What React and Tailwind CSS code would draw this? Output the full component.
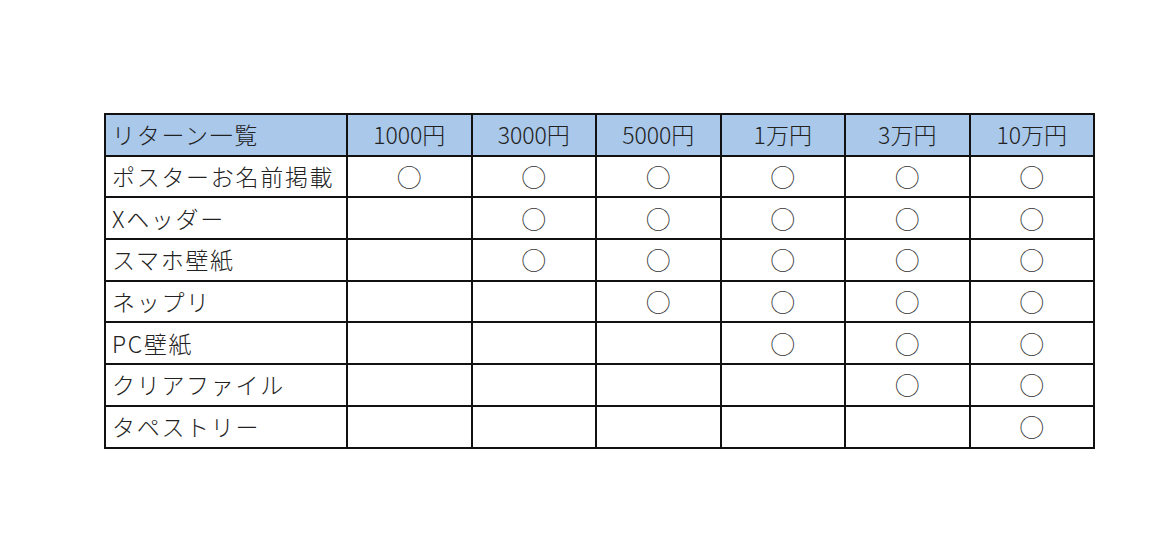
import React from "react";

const headers = ["1000円", "3000円", "5000円", "1万円", "3万円", "10万円"];
const rows = [
  ["ポスターお名前掲載", 0],
  ["Xヘッダー", 1],
  ["スマホ壁紙", 1],
  ["ネップリ", 2],
  ["PC壁紙", 3],
  ["クリアファイル", 4],
  ["タペストリー", 5],
];

export default function App() {
  return (
    <div
      className="w-[1170px] h-[548px] bg-white pl-[104px] pt-[113px] text-[#222]"
      style={{ fontFamily: '"Noto Sans CJK JP", "Noto Sans", sans-serif' }}
    >
      <div className="w-[991px] bg-[#111] p-[2px] grid grid-cols-[240px_repeat(6,1fr)] auto-rows-[39.7px] gap-[2px] font-light">
        <div className="bg-[#a9c8ea] flex items-center pl-[6px] text-[23px] tracking-[1.7px] leading-none">
          リターン一覧
        </div>
        {headers.map((h) => (
          <div
            key={h}
            className="bg-[#a9c8ea] flex items-center justify-center text-[23px] leading-none"
          >
            {h}
          </div>
        ))}
        {rows.map(([label, start]) => (
          <React.Fragment key={label}>
            <div className="bg-white flex items-center pl-[6px] text-[23px] tracking-[1.7px] leading-none whitespace-nowrap">
              {label}
            </div>
            {headers.map((h, i) => (
              <div
                key={h}
                className="bg-white flex items-center justify-center text-[25px] leading-none text-[#333]"
              >
                {i >= start ? "○" : ""}
              </div>
            ))}
          </React.Fragment>
        ))}
      </div>
    </div>
  );
}
